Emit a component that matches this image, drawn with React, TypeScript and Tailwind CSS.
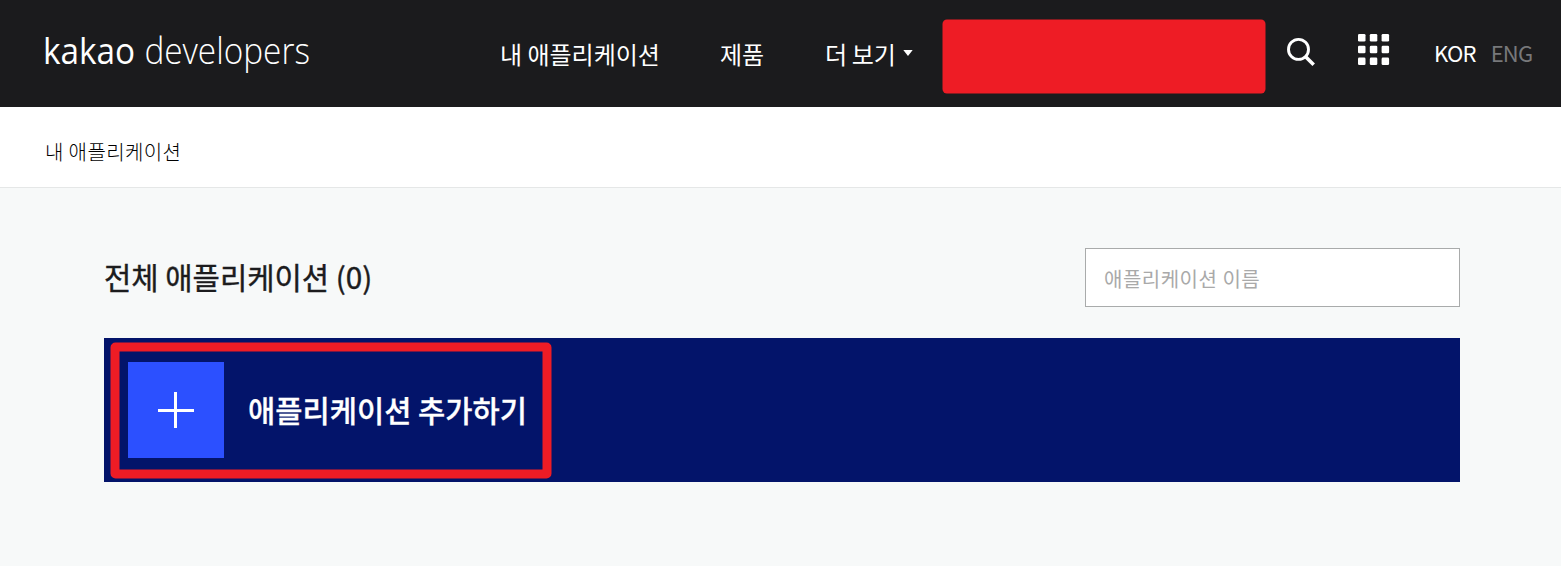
function SearchIcon() {
  return (
    <svg className="mt-[37px] ml-[20px]" width="30" height="30" viewBox="0 0 30 30" fill="none" stroke="#fff">
      <circle cx="12.5" cy="12.4" r="10" strokeWidth="2.9" />
      <path d="M19.4 19.4l8.3 8.3" strokeWidth="3.6" />
    </svg>
  );
}

function GridIcon() {
  const offsets = [0, 11.8, 23.6];
  return (
    <svg className="mt-[34px] ml-[42px]" width="32" height="32" viewBox="0 0 32 32" fill="#fff">
      {offsets.map((y) => offsets.map((x) => <rect key={`${x}-${y}`} x={x} y={y} width="7.5" height="7.5" rx="1.3" />))}
    </svg>
  );
}

export default function App() {
  return (
    <div className="flex h-[566px] w-[1561px] flex-col overflow-hidden bg-[#f7f9f9] font-['Noto_Sans_CJK_KR',sans-serif]">
      <header className="flex h-[107px] shrink-0 items-start bg-[#1b1b1d] text-white">
        <div className="w-[500px] pt-[26px] pl-[43px]">
          <div className="flex w-max origin-left scale-x-[0.926] gap-[10px] font-['Open_Sans',sans-serif] text-[36px] leading-[50px] whitespace-nowrap">
            <span className="font-medium">kakao</span>
            <span className="font-light">developers</span>
          </div>
        </div>
        <nav className="flex w-[442px] pt-[37px] text-[24px] leading-[34px] whitespace-nowrap">
          <span className="w-[220px]">내 애플리케이션</span>
          <span className="w-[105px]">제품</span>
          <span className="flex items-center gap-[8px] tracking-[-0.3px]">
            더 보기
            <svg className="-mt-[3px]" width="10" height="6" viewBox="0 0 10 6">
              <path d="M0.3 0h9.4L5 6z" fill="#fff" />
            </svg>
          </span>
        </nav>
        <svg className="mt-[19px]" width="324" height="76" viewBox="0 0 324 76">
          <rect x="0.5" y="0.5" width="323" height="74" rx="4.5" fill="#ee1c25" />
        </svg>
        <SearchIcon />
        <GridIcon />
        <div className="ml-[44px] flex gap-[15px] pt-[35px] text-[22px] leading-[34px] tracking-[-0.8px]">
          <span>KOR</span>
          <span className="text-[#77787a]">ENG</span>
        </div>
      </header>
      <div className="h-[81px] shrink-0 border-b border-[#e5e7e7] bg-white pt-[30px] pl-[45px] text-[20px] leading-[30px] font-light tracking-[0.4px] text-black">
        내 애플리케이션
      </div>
      <main className="pt-[60px] pr-[101px] pl-[104px]">
        <div className="flex h-[59px] items-center justify-between">
          <h1 className="text-[29.7px] font-normal text-[#1c1c1e] [-webkit-text-stroke:0.4px_#1c1c1e]">전체 애플리케이션 (0)</h1>
          <input
            className="h-[59px] w-[375px] border border-[#a9abab] bg-white px-[18px] pt-[2px] text-[20px] tracking-[0.5px] outline-none placeholder:text-[#a9a9a9]"
            placeholder="애플리케이션 이름"
          />
        </div>
        <div className="mt-[31px] flex h-[144px] items-start bg-[#03146a] pt-[24px] pl-[24px]">
          <button className="relative flex h-[96px] items-start">
            <span className="flex size-[96px] shrink-0 items-center justify-center bg-[#2c50ff]">
              <svg width="36" height="36" viewBox="0 0 36 36" fill="#fff">
                <path d="M16 0h3v36h-3zM0 17h36v3H0z" />
              </svg>
            </span>
            <span className="ml-[24px] text-[29.6px] leading-[95px] font-medium whitespace-nowrap text-white [-webkit-text-stroke:0.3px_white]">
              애플리케이션 추가하기
            </span>
            <svg className="pointer-events-none absolute -top-[20px] -left-[18px]" width="442" height="138" viewBox="0 0 442 138" fill="none">
              <rect x="5" y="5" width="432" height="127" rx="0.5" stroke="#ee1c25" strokeWidth="9" strokeLinejoin="round" />
            </svg>
          </button>
        </div>
      </main>
    </div>
  );
}
